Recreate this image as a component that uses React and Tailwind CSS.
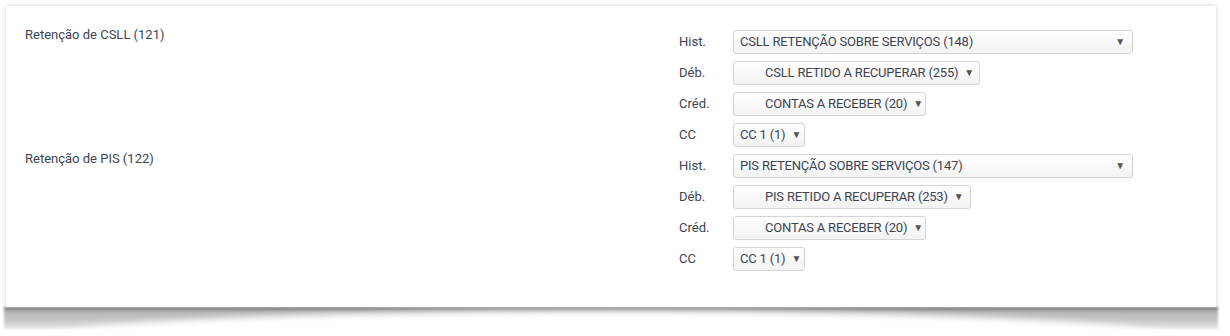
function Select({ value, width, indent }) {
  return (
    <div
      className={`flex items-center h-[24px] rounded-[3px] border border-[#d5d5d5] bg-[linear-gradient(#ffffff,#f3f3f3)] text-[#3d4451] text-[13px] tracking-[-0.2px] ${width}`}
    >
      <span className={`flex-1 whitespace-nowrap ${indent ? "pl-[31px]" : "pl-[6px]"}`}>{value}</span>
      <span className="pr-[7px] pl-[6px] text-[10px] text-[#555]">▼</span>
    </div>
  );
}

function Row({ label, children }) {
  return (
    <div className="flex items-center h-[31px]">
      <span className="w-[54px] text-[13px] text-[#3d4451]">{label}</span>
      {children}
    </div>
  );
}

function Section({ title, hist, deb, debWidth }) {
  return (
    <div className="flex">
      <div className="w-[654px] -mt-[1px] text-[13px] text-[#3d4451]">{title}</div>
      <div className="flex flex-col">
        <Row label="Hist.">
          <Select value={hist} width="w-[400px]" />
        </Row>
        <Row label="Déb.">
          <Select value={deb} width={debWidth} indent />
        </Row>
        <Row label="Créd.">
          <Select value="CONTAS A RECEBER (20)" width="w-[193px]" indent />
        </Row>
        <Row label="CC">
          <Select value="CC 1 (1)" width="w-[72px]" />
        </Row>
      </div>
    </div>
  );
}

export default function App() {
  return (
    <div className="w-[1230px] h-[336px] bg-white pt-[6px] pl-[6px] font-['Roboto',sans-serif]">
      <div className="relative w-[1210px]">
        <div className="relative z-10 h-[301px] bg-white shadow-[0_0_5px_rgba(0,0,0,0.18)] pl-[19px] pt-[20px]">
          <Section
            title="Retenção de CSLL (121)"
            hist="CSLL RETENÇÃO SOBRE SERVIÇOS (148)"
            deb="CSLL RETIDO A RECUPERAR (255)"
            debWidth="w-[247px]"
          />
          <Section
            title="Retenção de PIS (122)"
            hist="PIS RETENÇÃO SOBRE SERVIÇOS (147)"
            deb="PIS RETIDO A RECUPERAR (253)"
            debWidth="w-[238px]"
          />
        </div>
        <div className="absolute left-[-2px] right-[-2px] top-[301px] h-[22px] overflow-hidden bg-[linear-gradient(#7e7e7e,#b8b8b8_25%,#c8c8c8_60%,#e8e8e8)] blur-[1px]">
          <div className="absolute left-[3%] w-[94%] top-[4px] h-[56px] rounded-[50%] bg-white blur-[3px]" />
        </div>
      </div>
    </div>
  );
}
